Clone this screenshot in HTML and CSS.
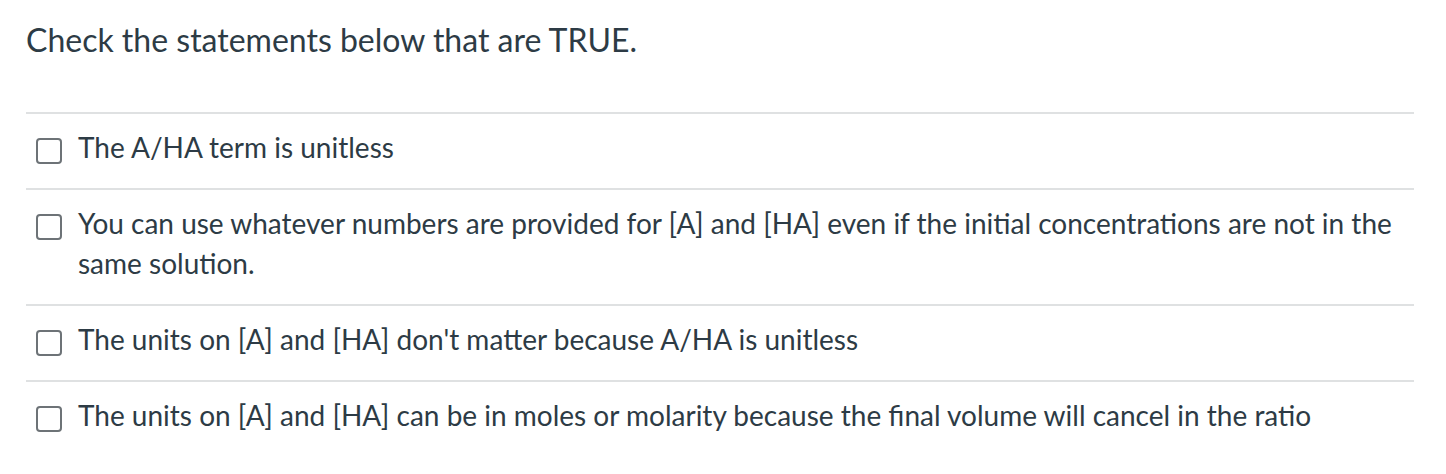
FILE: index.html
```html
<!DOCTYPE html>
<html lang="en">
<head>
<meta charset="utf-8">
<title>Question</title>
<link rel="stylesheet" href="styles.css">
</head>
<body>
<div class="question">
  <div class="question-text">Check the statements below that are TRUE.</div>
  <div class="answers">
    <label class="answer">
      <span class="box"></span>
      <span class="answer-text">The A/HA term is unitless</span>
    </label>
    <label class="answer">
      <span class="box"></span>
      <span class="answer-text">You can use whatever numbers are provided for [A] and [HA] even if the initial concentrations are not in the same solution.</span>
    </label>
    <label class="answer">
      <span class="box"></span>
      <span class="answer-text">The units on [A] and [HA] don't matter because A/HA is unitless</span>
    </label>
    <label class="answer">
      <span class="box"></span>
      <span class="answer-text">The units on [A] and [HA] can be in moles or molarity because the final volume will cancel in the ratio</span>
    </label>
  </div>
</div>
</body>
</html>
```
FILE: styles.css
```css
html, body {
  margin: 0;
  padding: 0;
  background: #ffffff;
}
body {
  font-family: Lato, "Open Sans", sans-serif;
  color: #2d3b45;
}
.question {
  padding: 0 32px 0 26px;
}
.question-text {
  font-size: 32px;
  line-height: 38px;
  padding-top: 21px;
  margin-bottom: 53px;
}
.answers {
  display: flex;
  flex-direction: column;
}
.answer {
  display: flex;
  align-items: flex-start;
  gap: 16px;
  border-top: 2px solid #dfe1e2;
  padding: 13px 0 21px 10px;
  font-size: 28px;
  line-height: 40px;
}
.box {
  flex: none;
  box-sizing: border-box;
  width: 26px;
  height: 26px;
  margin-top: 11px;
  border: 2px solid #6d7377;
  border-radius: 4px;
  background: #fff;
}
.answer-text {
  flex: 1;
}
```
